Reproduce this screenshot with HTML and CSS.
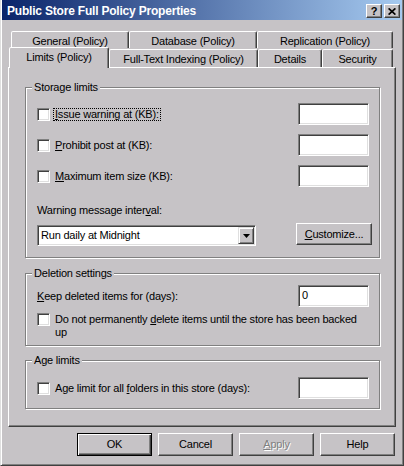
FILE: index.html
```html
<!DOCTYPE html>
<html lang="en">
<head>
<meta charset="utf-8">
<title>Public Store Full Policy Properties</title>
<link rel="stylesheet" href="styles.css">
</head>
<body>
<div class="window">
  <div class="titlebar">
    <span class="title">Public Store Full Policy Properties</span>
    <span class="caption-btns">
      <span class="cap-btn cap-help">?</span>
      <span class="cap-btn">
        <svg width="8" height="7" viewBox="0 0 8 7"><path d="M0.6 0.4L7.4 6.6M7.4 0.4L0.6 6.6" stroke="#000" stroke-width="1.7"/></svg>
      </span>
    </span>
  </div>
  <div class="client">
    <div class="tabs">
      <div class="tab-row tab-row-back">
        <div class="tab tab-back tab-general">General (Policy)</div>
        <div class="tab tab-back tab-database">Database (Policy)</div>
        <div class="tab tab-back tab-replication">Replication (Policy)</div>
      </div>
      <div class="tab-row tab-row-front">
        <div class="tab tab-active tab-limits">Limits (Policy)</div>
        <div class="tab tab-front tab-fulltext">Full-Text Indexing (Policy)</div>
        <div class="tab tab-front tab-details">Details</div>
        <div class="tab tab-front tab-security">Security</div>
      </div>
    </div>
    <div class="panel">
      <div class="group group-storage">
        <div class="group-title">Storage limits</div>
        <div class="row row-first">
          <span class="check"></span>
          <span class="label"><span class="focus"><u>I</u>ssue warning at (KB):</span></span>
          <span class="field"></span>
        </div>
        <div class="row">
          <span class="check"></span>
          <span class="label"><u>P</u>rohibit post at (KB):</span>
          <span class="field"></span>
        </div>
        <div class="row">
          <span class="check"></span>
          <span class="label"><u>M</u>aximum item size (KB):</span>
          <span class="field"></span>
        </div>
        <div class="interval-label">Warning message inter<u>v</u>al:</div>
        <div class="combo-row">
          <div class="combo">
            <span class="combo-text">Run daily at Midnight</span>
            <span class="combo-btn">
              <svg width="7" height="4" viewBox="0 0 7 4"><polygon points="0,0 7,0 3.5,4" fill="#000"/></svg>
            </span>
          </div>
          <div class="btn btn-customize"><span><u>C</u>ustomize...</span></div>
        </div>
      </div>

      <div class="group group-deletion">
        <div class="group-title">Deletion settings</div>
        <div class="row row-keep">
          <span class="label"><u>K</u>eep deleted items for (days):</span>
          <span class="field field-value">0</span>
        </div>
        <div class="check-row">
          <span class="check"></span>
          <span class="check-label"><span class="line">Do not permanently <u>d</u>elete items until the store has been backed</span><span class="line">up</span></span>
        </div>
      </div>

      <div class="group group-age">
        <div class="group-title">Age limits</div>
        <div class="row row-age">
          <span class="check"></span>
          <span class="label">Age limit for all <u>f</u>olders in this store (days):</span>
          <span class="field"></span>
        </div>
      </div>
    </div>
    <div class="actions">
      <div class="btn btn-default">OK</div>
      <div class="btn">Cancel</div>
      <div class="btn btn-disabled"><span><u>A</u>pply</span></div>
      <div class="btn">Help</div>
    </div>
  </div>
</div>
</body>
</html>
```

FILE: styles.css
```css
* {
  box-sizing: border-box;
}

html,
body {
  margin: 0;
  padding: 0;
}

body {
  width: 404px;
  height: 466px;
  overflow: hidden;
  background: #c6c3c6;
  font-family: "Liberation Sans", Arial, sans-serif;
  font-size: 11px;
  line-height: 13px;
  letter-spacing: -0.2px;
  color: #000;
}

.window {
  width: 404px;
  height: 466px;
  padding: 0 1px 1px 1px;
  background: #c6c3c6;
  border-left: 1px solid #dfdfdf;
  border-right: 1px solid #404040;
  border-bottom: 1px solid #404040;
  box-shadow: inset 1px 0 #fff, inset -1px -1px #808080;
}

/* Title bar */
.titlebar {
  display: flex;
  height: 20px;
  padding: 0 2px 0 5px;
  background: linear-gradient(to right, #0a246a, #a6caf0);
}

.title {
  flex: 1;
  color: #fff;
  font-weight: bold;
  font-size: 12px;
  line-height: 17px;
  padding-top: 3px;
  letter-spacing: -0.2px;
  white-space: nowrap;
}

.caption-btns {
  display: flex;
  gap: 2px;
  padding-top: 4px;
}

.cap-btn {
  width: 16px;
  height: 14px;
  display: flex;
  align-items: center;
  justify-content: center;
  background: #c6c3c6;
  border: 1px solid;
  border-color: #fff #404040 #404040 #fff;
  box-shadow: inset -1px -1px #808080;
}

.cap-help {
  font-weight: bold;
  font-size: 11px;
  line-height: 12px;
  letter-spacing: 0;
}

/* Client area */
.client {
  padding: 11px 6px 0 6px;
}

.tab-row {
  display: flex;
}

.tab-row-back {
  height: 17px;
  padding-left: 3px;
}

.tab-row-front {
  height: 19px;
  padding-left: 1px;
  align-items: flex-start;
}

.tab {
  flex: none;
  border: 1px solid;
  border-bottom: none;
  border-color: #fff #404040 transparent #fff;
  border-radius: 2px 2px 0 0;
  box-shadow: inset -1px 0 #808080;
  text-align: center;
  white-space: nowrap;
  padding-top: 3px;
  background: #c6c3c6;
}

.tab-back {
  height: 17px;
}

.tab-front {
  height: 18px;
  margin-top: 1px;
}

.tab-active {
  position: relative;
  z-index: 1;
  height: 21px;
  margin-top: -1px;
}

.tab-general { width: 118px; }
.tab-database { width: 128px; }
.tab-replication { width: 136px; }
.tab-limits { width: 100px; }
.tab-fulltext { width: 149px; }
.tab-details { width: 64px; }
.tab-security { width: 71px; }

/* Panel */
.panel {
  height: 360px;
  border: 1px solid;
  border-color: #fff #404040 #404040 #fff;
  box-shadow: inset -1px -1px #808080;
  padding: 19px 15px 0 16px;
}

.group {
  border: 1px solid #808080;
  box-shadow: inset 1px 1px #fff, 1px 1px #fff;
  padding: 0 10px 11px 11px;
}

.group-title {
  width: fit-content;
  margin: -7px 0 0 -5px;
  padding: 0 2px;
  background: #c6c3c6;
  white-space: nowrap;
}

.group-deletion {
  margin-top: 15px;
  padding-bottom: 6px;
}

.group-age {
  margin-top: 14px;
  padding-bottom: 9px;
}

.row {
  display: flex;
  align-items: center;
  height: 22px;
  margin-top: 9px;
}

.row-keep {
  margin-top: 5px;
}

.row-age {
  margin-top: 10px;
}

.check {
  flex: none;
  width: 13px;
  height: 13px;
  margin-right: 5px;
  background: #fff;
  border: 1px solid;
  border-color: #808080 #fff #fff #808080;
  box-shadow: inset 1px 1px #404040, inset -1px -1px #dfdfdf;
}

.label {
  white-space: nowrap;
}

.focus {
  display: inline-block;
  line-height: 11px;
  padding: 0 1px;
  margin-left: -1px;
  outline: 1px dotted #000;
}

.field {
  flex: none;
  width: 71px;
  height: 22px;
  margin-left: auto;
  padding: 3px 0 0 3px;
  background: #fff;
  border: 1px solid;
  border-color: #808080 #fff #fff #808080;
  box-shadow: inset 1px 1px #404040, inset -1px -1px #dfdfdf;
}

.interval-label {
  margin-top: 17px;
}

.combo-row {
  display: flex;
  align-items: flex-start;
  height: 23px;
  margin-top: 6px;
}

.combo {
  display: flex;
  align-items: center;
  width: 219px;
  height: 21px;
  margin-top: 2px;
  padding: 1px;
  background: #fff;
  border: 1px solid;
  border-color: #808080 #fff #fff #808080;
  box-shadow: inset 1px 1px #404040, inset -1px -1px #dfdfdf;
}

.combo-text {
  flex: 1;
  padding-left: 2px;
  white-space: nowrap;
}

.combo-btn {
  flex: none;
  display: flex;
  align-items: center;
  justify-content: center;
  width: 16px;
  height: 17px;
  background: #c6c3c6;
  border: 1px solid;
  border-color: #dfdfdf #404040 #404040 #dfdfdf;
  box-shadow: inset 1px 1px #fff, inset -1px -1px #808080;
}

.check-row {
  display: flex;
  align-items: flex-start;
  margin-top: 6px;
}

.check-label {
  display: flex;
  flex-direction: column;
}

.line {
  display: block;
  white-space: nowrap;
}

/* Buttons */
.btn {
  flex: none;
  display: flex;
  align-items: center;
  justify-content: center;
  width: 75px;
  height: 23px;
  background: #c6c3c6;
  border: 1px solid;
  border-color: #fff #404040 #404040 #fff;
  box-shadow: inset -1px -1px #808080;
  white-space: nowrap;
}

.btn-customize {
  width: 76px;
  height: 22px;
  margin-left: auto;
  margin-right: -3px;
}

.actions {
  display: flex;
  justify-content: flex-end;
  gap: 6px;
  margin-top: 6px;
  padding-right: 1px;
}

.btn-default {
  border-color: #000;
  box-shadow: inset 1px 1px #fff, inset -1px -1px #404040, inset -2px -2px #808080;
}

.btn-disabled {
  color: #808080;
  text-shadow: 1px 1px 0 #fff;
}
```
